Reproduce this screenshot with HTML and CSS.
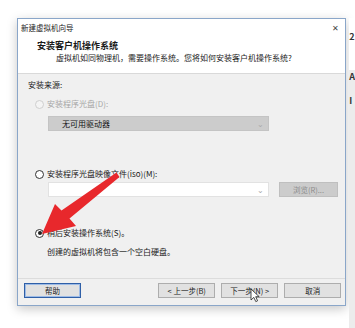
FILE: index.html
```html
<!DOCTYPE html>
<html lang="zh-CN">
<head>
  <meta charset="UTF-8" />
  <title>新建虚拟机向导</title>
  <link rel="stylesheet" href="styles.css">
</head>
<body>

<div class="desk">
  <div class="window">
    <div class="titlebar">
      <span>新建虚拟机向导</span>
      <span class="close">✕</span>
    </div>

    <div class="header">
      <div class="h-title">安装客户机操作系统</div>
      <div class="h-sub">虚拟机如同物理机，需要操作系统。您将如何安装客户机操作系统?</div>
    </div>

    <div class="content">
      <div class="src-label">安装来源:</div>

      <div class="radio disabled"><span class="dot"></span>安装程序光盘(D):</div>
      <div class="combo gray">无可用驱动器<span class="caret">⌄</span></div>

      <div class="radio opt2"><span class="dot"></span>安装程序光盘映像文件(iso)(M):</div>
      <div class="iso-row">
        <div class="combo white"><span class="caret">⌄</span></div>
        <div class="btn browse">浏览(R)...</div>
      </div>

      <div class="radio opt3"><span class="dot checked"></span>稍后安装操作系统(S)。</div>
      <div class="note">创建的虚拟机将包含一个空白硬盘。</div>
    </div>

    <div class="footer">
      <div class="btn focus">帮助</div>
      <div class="spacer"></div>
      <div class="btn">&lt; 上一步(B)</div>
      <div class="btn">下一步(N) &gt;</div>
      <div class="btn">取消</div>
    </div>
  </div>

  <div class="side">
    <span class="s1">2</span>
    <span class="s2">A</span>
    <span class="s3">I</span>
  </div>
</div>

<!-- annotation arrow + mouse pointer on top of the dialog -->
<svg class="overlay" width="355" height="328" viewBox="0 0 355 328">
  <path d="M42 234 L55 204 L61.5 210.5 L116.5 172.5 L119.5 177 L69.5 218.5 L76 226 Z" fill="#e8282c"/>
  <g transform="translate(251,289)">
    <path d="M0 0 L0 11 L2.8 8.4 L4.8 12.6 L6.6 11.8 L4.7 7.7 L8.2 7.7 Z" fill="#fff" stroke="#222" stroke-width="0.8" stroke-linejoin="round"/>
  </g>
</svg>

</body>
</html>
```

FILE: styles.css
```css
body {
  margin: 0;
  background: #fff;
  font-family: "Noto Sans CJK SC", "Noto Sans", sans-serif;
  color: #1a1a1a;
  font-size: 8px;
}
.desk {
  display: flex;
  padding: 18px 0 0 17px;
  height: 310px;
}
.window {
  box-sizing: border-box;
  width: 332px;
  height: 288px;
  border: 1px solid #8aa6c9;
  background: #f0f0f0;
  box-shadow: 0 3px 10px rgba(0,0,0,0.22);
  display: flex;
  flex-direction: column;
}
.titlebar {
  height: 16px;
  background: #fff;
  display: flex;
  justify-content: space-between;
  align-items: center;
  padding: 0 6px 0 3px;
  font-size: 7.5px;
  color: #222;
}
.close {
  font-size: 8px;
  color: #444;
}
.header {
  background: #fff;
  border-bottom: 1px solid #d9d9d9;
  padding: 5px 0 0 19px;
  box-sizing: border-box;
  height: 39px;
}
.h-title {
  font-size: 9px;
  font-weight: bold;
  line-height: 12px;
}
.h-sub {
  line-height: 12px;
  padding-left: 19px;
}
.content {
  height: 204px;
  padding: 5px 0 0 10px;
  box-sizing: border-box;
  display: flex;
  flex-direction: column;
}
.src-label {
  line-height: 12px;
}
.radio {
  display: flex;
  align-items: center;
  line-height: 12px;
  margin: 7px 0 0 7px;
}
.radio .dot {
  width: 7px;
  height: 7px;
  border: 1px solid #333;
  border-radius: 50%;
  background: #fff;
  margin-right: 3px;
  display: flex;
  align-items: center;
  justify-content: center;
}
.radio .dot.checked::after {
  content: "";
  width: 4px;
  height: 4px;
  border-radius: 50%;
  background: #222;
}
.radio.disabled {
  color: #a6a6a6;
}
.radio.disabled .dot {
  border-color: #cfcfcf;
  background: #f4f4f4;
}
.radio.opt2 {
  margin-top: 37px;
}
.radio.opt3 {
  margin-top: 30px;
}
.combo {
  box-sizing: border-box;
  width: 221px;
  height: 15px;
  margin-left: 20px;
  display: flex;
  align-items: center;
  justify-content: space-between;
  padding: 0 4px 0 13px;
  line-height: 15px;
}
.combo.gray {
  margin-top: 6px;
  background: #cccccc;
  border: 1px solid #c4c4c4;
  color: #111;
}
.combo.white {
  margin: 0;
  background: #fff;
  border: 1px solid #e2e2e2;
  justify-content: flex-end;
}
.caret {
  color: #aaa;
  font-size: 8px;
  line-height: 8px;
}
.iso-row {
  display: flex;
  gap: 10px;
  margin: 2px 0 0 20px;
}
.note {
  line-height: 12px;
  margin: 7px 0 0 19px;
}
.btn {
  box-sizing: border-box;
  width: 57px;
  height: 15px;
  background: #e1e1e1;
  border: 1px solid #adadad;
  display: flex;
  align-items: center;
  justify-content: center;
  font-size: 7.5px;
  color: #222;
}
.btn.browse {
  width: 59px;
  background: #cccccc;
  border-color: #bfbfbf;
  color: #8d8d8d;
}
.btn.focus {
  border: 1px solid #2f5fa7;
  box-shadow: inset 0 0 0 1px #9dbbe6;
}
.footer {
  flex: 1;
  border-top: 1px solid #dcdcdc;
  display: flex;
  gap: 6px;
  padding: 4px 4px 0 6px;
}
.spacer {
  flex: 1;
}
.side {
  flex: 1;
  margin-left: 3px;
  display: flex;
  flex-direction: column;
  font-size: 9px;
  font-weight: bold;
  color: #333;
  line-height: 10px;
  background: linear-gradient(#fff 0, #fff 52px, #ececec 52px);
}
.side .s1 {
  margin-top: 14px;
}
.side .s2 {
  margin-top: 30px;
}
.side .s3 {
  margin-top: 14px;
}
.overlay {
  position: absolute;
  left: 0;
  top: 0;
  pointer-events: none;
}
```
